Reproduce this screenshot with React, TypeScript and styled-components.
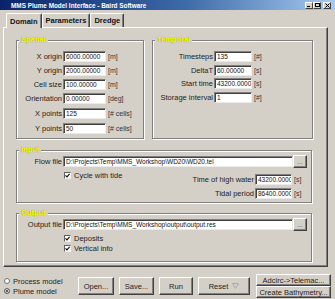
import React from 'react';
import styled, { createGlobalStyle } from 'styled-components';

const GlobalStyle = createGlobalStyle`
  html, body { margin: 0; padding: 0; background: #d4d0c8; }
  body { font-family: "Liberation Sans", Arial, sans-serif; }
  * { box-sizing: border-box; }
`;

const Window = styled.div`
  width: 335px;
  height: 299px;
  background: #d4d0c8;
  display: flex;
  flex-direction: column;
  overflow: hidden;
  color: #222;
  font-size: 7.5px;
`;

const TitleBar = styled.div`
  height: 10px;
  flex: none;
  display: flex;
  align-items: center;
  padding: 0 4px 0 11px;
  background: linear-gradient(90deg, #0a246a 0%, #3d6aa8 55%, #a6caf0 100%);
`;

const Title = styled.span`
  flex: 1;
  color: #fff;
  font-weight: bold;
  font-size: 6.4px;
  white-space: nowrap;
`;

const CaptionButtons = styled.div`
  display: flex;
  align-items: center;
`;

const CaptionButton = styled.div<{ $gap?: boolean }>`
  width: 8px;
  height: 7px;
  margin-left: ${(p) => (p.$gap ? '2px' : '0')};
  background: #d4d0c8;
  border: 1px solid;
  border-color: #fff #404040 #404040 #fff;
  display: flex;
  align-items: center;
  justify-content: center;
`;

const TabStrip = styled.div`
  margin-top: 3px;
  margin-bottom: -1px;
  height: 15px;
  padding-left: 6px;
  display: flex;
  align-items: flex-start;
  flex: none;
`;

const Tab = styled.div<{ $active?: boolean }>`
  position: relative;
  z-index: ${(p) => (p.$active ? 1 : 0)};
  height: ${(p) => (p.$active ? '15px' : '14px')};
  padding: 0 3px 0 3px;
  display: flex;
  align-items: center;
  font-weight: bold;
  font-size: 7.5px;
  color: #111;
  background: #d4d0c8;
  border-top: 1px solid #fff;
  border-left: 1px solid #fff;
  border-right: 1px solid #404040;
  box-shadow: inset -1px 0 0 #808080;
  border-radius: 2px 2px 0 0;
`;

const Panel = styled.div`
  margin: 0 7px 0 3px;
  height: 240px;
  flex: none;
  border: 1px solid;
  border-color: #fff #404040 #404040 #fff;
  box-shadow: inset -1px -1px 0 #808080;
  padding: 12px 15px 0 12px;
  display: flex;
  flex-direction: column;
`;

const TopRow = styled.div`
  display: grid;
  grid-template-columns: 128px 161px;
  column-gap: 8px;
  height: 99px;
`;

const Group = styled.div<{ $h?: number; $mt?: number }>`
  border: 1px solid #808080;
  box-shadow: inset 1px 1px 0 #fff, 1px 1px 0 #fff;
  display: flex;
  flex-direction: column;
  height: ${(p) => (p.$h ? `${p.$h}px` : 'auto')};
  margin-top: ${(p) => p.$mt ?? 0}px;
`;

const GroupTitle = styled.div`
  align-self: flex-start;
  margin: -5px 0 0 2px;
  padding: 0 2px;
  height: 8px;
  line-height: 8px;
  background: #d4d0c8;
  color: #ffff00;
  font-weight: bold;
  font-size: 7.5px;
  text-shadow: 0 0 1px #7a7a10;
`;

const Fields = styled.div<{ $mt: number; $gap: number }>`
  margin-top: ${(p) => p.$mt}px;
  display: flex;
  flex-direction: column;
  gap: ${(p) => p.$gap}px;
`;

const FieldRow = styled.div<{ $cols: string; $extra?: boolean }>`
  display: grid;
  grid-template-columns: ${(p) => p.$cols};
  align-items: center;
  height: 11px;
  margin-top: ${(p) => (p.$extra ? '1px' : '0')};
`;

const FieldLabel = styled.span`
  text-align: right;
  padding-right: 1px;
  white-space: nowrap;
  line-height: 11px;
  font-size: 7.5px;
  color: #222;
`;

const TextBox = styled.div<{ $w?: number }>`
  height: 11px;
  width: ${(p) => (p.$w ? `${p.$w}px` : 'auto')};
  background: #fff;
  border-top: 1px solid #808080;
  border-left: 1px solid #808080;
  border-right: 1px solid #eaeaea;
  border-bottom: 1px solid #eaeaea;
  box-shadow: inset 1px 1px 0 #404040;
  padding-left: 2px;
  font-size: 6.5px;
  line-height: 9px;
  white-space: nowrap;
  overflow: hidden;
  color: #111;
`;

const Unit = styled.span`
  padding-left: 2px;
  white-space: nowrap;
  font-size: 7px;
  color: #333;
  line-height: 11px;
`;

const FileRow = styled.div<{ $mt: number }>`
  display: flex;
  align-items: center;
  height: 13px;
  margin-top: ${(p) => p.$mt}px;
`;

const FileLabel = styled.span`
  width: 46px;
  flex: none;
  text-align: right;
  padding-right: 1px;
  white-space: nowrap;
  font-size: 7.5px;
`;

const BrowseButton = styled.div`
  width: 14px;
  height: 13px;
  flex: none;
  background: #d4d0c8;
  border: 1px solid;
  border-color: #fff #404040 #404040 #fff;
  box-shadow: inset -1px -1px 0 #808080;
  font-size: 6px;
  display: flex;
  align-items: center;
  justify-content: center;
  padding-top: 1px;
  color: #222;
`;

const InputLower = styled.div`
  display: flex;
  justify-content: space-between;
`;

const CheckList = styled.div<{ $mt: number }>`
  margin: ${(p) => p.$mt}px 0 0 47px;
  display: flex;
  flex-direction: column;
  gap: 3px;
`;

const CheckRow = styled.label`
  display: flex;
  align-items: center;
  gap: 3px;
  height: 7px;
  font-size: 7.5px;
  white-space: nowrap;
`;

const CheckBox = styled.span`
  width: 7px;
  height: 7px;
  flex: none;
  background: #fff;
  border-top: 1px solid #606060;
  border-left: 1px solid #606060;
  border-right: 1px solid #eee;
  border-bottom: 1px solid #eee;
  display: flex;
  align-items: center;
  justify-content: center;
`;

const TideGrid = styled.div`
  margin-top: 6px;
  display: flex;
  flex-direction: column;
  gap: 3px;
`;

const BottomBar = styled.div`
  flex: 1;
  display: flex;
  align-items: flex-start;
  padding: 7px 0 0 4px;
`;

const RadioList = styled.div`
  width: 74px;
  flex: none;
  margin-top: 2px;
  display: flex;
  flex-direction: column;
`;

const RadioRow = styled.label`
  display: flex;
  align-items: center;
  gap: 3px;
  height: 10px;
  font-size: 7.5px;
  white-space: nowrap;
`;

const RadioDot = styled.span<{ $on?: boolean }>`
  width: 6px;
  height: 6px;
  border-radius: 50%;
  flex: none;
  background: ${(p) => (p.$on ? '#222' : '#fff')};
  border: 1px solid #707070;
  box-shadow: ${(p) => (p.$on ? 'inset 0 0 0 1px #fff' : 'none')};
`;

const Button = styled.div<{ $w: number; $h?: number; $ml?: number; $mt?: number }>`
  width: ${(p) => p.$w}px;
  height: ${(p) => p.$h ?? 18}px;
  margin-left: ${(p) => p.$ml ?? 0}px;
  margin-top: ${(p) => p.$mt ?? 0}px;
  flex: none;
  background: #d4d0c8;
  border: 1px solid;
  border-color: #fff #404040 #404040 #fff;
  box-shadow: inset -1px -1px 0 #808080;
  display: flex;
  align-items: center;
  justify-content: center;
  gap: 4px;
  font-size: 7.5px;
  white-space: nowrap;
  color: #222;
`;

const RightStack = styled.div`
  margin-left: 6px;
  display: flex;
  flex-direction: column;
`;

const spatial = [
  { label: 'X origin', value: '6000.00000', unit: '[m]' },
  { label: 'Y origin', value: '2000.00000', unit: '[m]' },
  { label: 'Cell size', value: '100.00000', unit: '[m]' },
  { label: 'Orientation', value: '0.00000', unit: '[deg]' },
  { label: 'X points', value: '125', unit: '[# cells]', extra: true },
  { label: 'Y points', value: '50', unit: '[# cells]', extra: true },
];

const temporal = [
  { label: 'Timesteps', value: '135', unit: '[#]' },
  { label: 'DeltaT', value: '60.00000', unit: '[s]' },
  { label: 'Start time', value: '43200.0000', unit: '[s]' },
  { label: 'Storage interval', value: '1', unit: '[#]' },
];

const tide = [
  { label: 'Time of high water', value: '43200.0000', unit: '[s]' },
  { label: 'Tidal period', value: '86400.0000', unit: '[s]' },
];

const Check = () => (
  <svg width="5" height="5" viewBox="0 0 5 5">
    <path d="M0.5 2.3 L2 3.8 L4.6 0.9" stroke="#111" strokeWidth="1.2" fill="none" />
  </svg>
);

export default function App() {
  return (
    <>
      <GlobalStyle />
      <Window>
        <TitleBar>
          <Title>MMS Plume Model Interface - Baird Software</Title>
          <CaptionButtons>
            <CaptionButton>
              <svg width="4" height="4" viewBox="0 0 4 4"><rect x="0" y="3" width="3" height="1" fill="#000" /></svg>
            </CaptionButton>
            <CaptionButton>
              <svg width="5" height="4" viewBox="0 0 5 4"><rect x="0.5" y="0.5" width="4" height="3" stroke="#000" strokeWidth="1" fill="none" /></svg>
            </CaptionButton>
            <CaptionButton $gap>
              <svg width="5" height="5" viewBox="0 0 5 5"><path d="M0.5 0.5 L4.5 4.5 M4.5 0.5 L0.5 4.5" stroke="#000" strokeWidth="1" /></svg>
            </CaptionButton>
          </CaptionButtons>
        </TitleBar>

        <TabStrip>
          <Tab $active>Domain</Tab>
          <Tab>Parameters</Tab>
          <Tab>Dredge</Tab>
        </TabStrip>

        <Panel>
          <TopRow>
            <Group>
              <GroupTitle>Spatial</GroupTitle>
              <Fields $mt={7} $gap={3}>
                {spatial.map((r) => (
                  <FieldRow key={r.label} $cols="46px 43px auto" $extra={r.extra}>
                    <FieldLabel>{r.label}</FieldLabel>
                    <TextBox>{r.value}</TextBox>
                    <Unit>{r.unit}</Unit>
                  </FieldRow>
                ))}
              </Fields>
            </Group>
            <Group>
              <GroupTitle>Temporal</GroupTitle>
              <Fields $mt={7} $gap={2.5}>
                {temporal.map((r) => (
                  <FieldRow key={r.label} $cols="61px 38px auto">
                    <FieldLabel>{r.label}</FieldLabel>
                    <TextBox>{r.value}</TextBox>
                    <Unit>{r.unit}</Unit>
                  </FieldRow>
                ))}
              </Fields>
            </Group>
          </TopRow>

          <Group $h={53} $mt={11}>
            <GroupTitle>Input</GroupTitle>
            <FileRow $mt={1}>
              <FileLabel>Flow file</FileLabel>
              <TextBox $w={230}>D:\Projects\Temp\MMS_Workshop\WD20\WD20.tel</TextBox>
              <BrowseButton>...</BrowseButton>
            </FileRow>
            <InputLower>
              <CheckList $mt={4}>
                <CheckRow>
                  <CheckBox><Check /></CheckBox>
                  Cycle with tide
                </CheckRow>
              </CheckList>
              <TideGrid>
                {tide.map((r) => (
                  <FieldRow key={r.label} $cols="80px 37px 19px">
                    <FieldLabel>{r.label}</FieldLabel>
                    <TextBox>{r.value}</TextBox>
                    <Unit>{r.unit}</Unit>
                  </FieldRow>
                ))}
              </TideGrid>
            </InputLower>
          </Group>

          <Group $h={49} $mt={10}>
            <GroupTitle>Output</GroupTitle>
            <FileRow $mt={1}>
              <FileLabel>Output file</FileLabel>
              <TextBox $w={230}>D:\Projects\Temp\MMS_Workshop\output\output.res</TextBox>
              <BrowseButton>...</BrowseButton>
            </FileRow>
            <CheckList $mt={4}>
              <CheckRow>
                <CheckBox><Check /></CheckBox>
                Deposits
              </CheckRow>
              <CheckRow>
                <CheckBox><Check /></CheckBox>
                Vertical info
              </CheckRow>
            </CheckList>
          </Group>
        </Panel>

        <BottomBar>
          <RadioList>
            <RadioRow>
              <RadioDot />
              Process model
            </RadioRow>
            <RadioRow>
              <RadioDot $on />
              Plume model
            </RadioRow>
          </RadioList>
          <Button $w={36} $mt={3}>Open...</Button>
          <Button $w={35} $mt={3} $ml={5}>Save...</Button>
          <Button $w={34} $mt={3} $ml={5}>Run</Button>
          <Button $w={52} $mt={3} $ml={5}>
            Reset
            <svg width="7" height="6" viewBox="0 0 7 6">
              <path d="M0.5 0.5 L6.5 0.5 L3.5 5.5 Z" fill="none" stroke="#a8a8a8" strokeWidth="1" />
            </svg>
          </Button>
          <RightStack>
            <Button $w={75} $h={12}>Adcirc-&gt;Telemac...</Button>
            <Button $w={75} $h={12}>Create Bathymetry...</Button>
          </RightStack>
        </BottomBar>
      </Window>
    </>
  );
}
